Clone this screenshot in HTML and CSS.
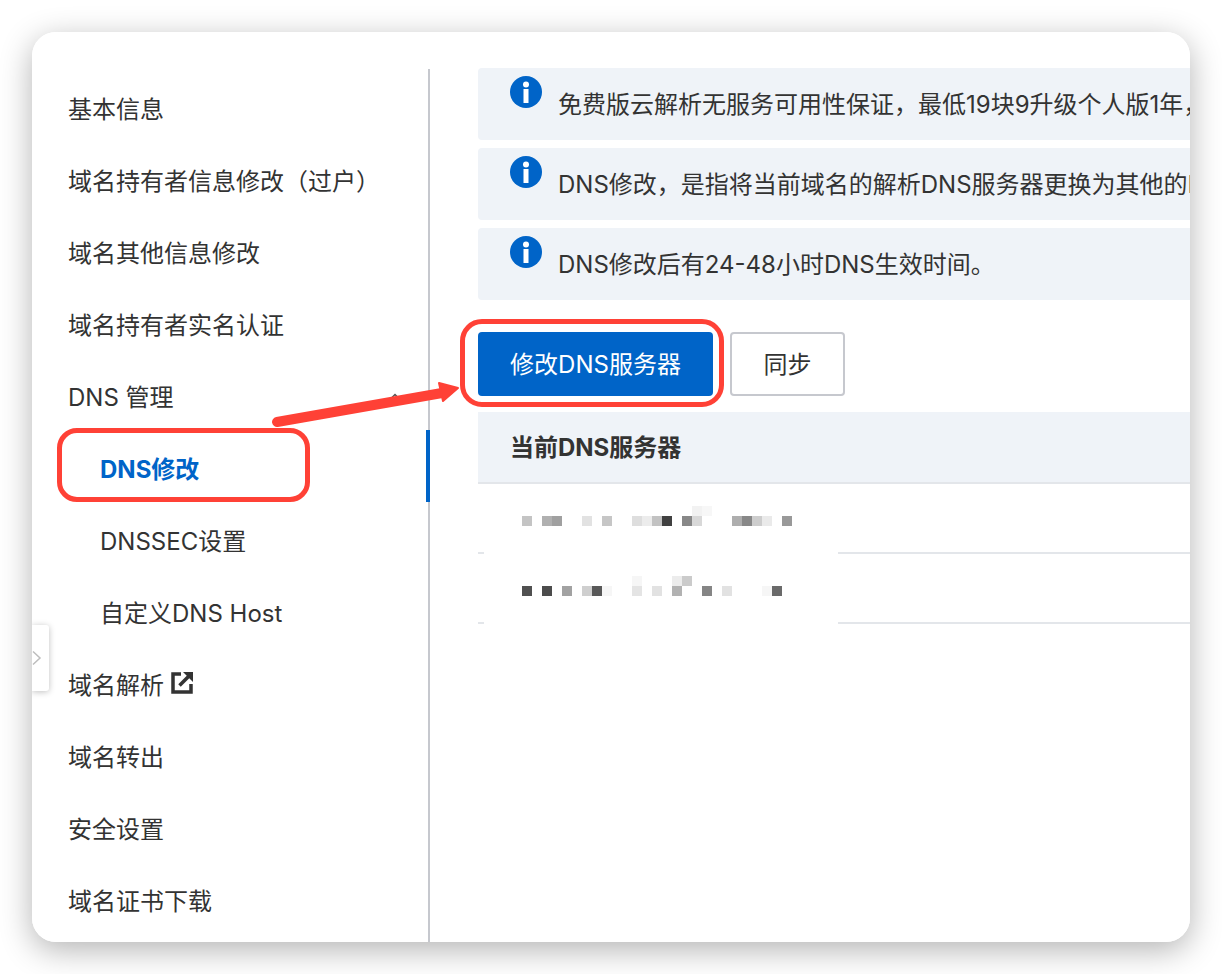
FILE: index.html
```html
<!DOCTYPE html>
<html lang="zh-CN">
<head>
<meta charset="utf-8">
<title>DNS修改</title>
<link rel="stylesheet" href="styles.css">
</head>
<body>
<div class="card">
  <nav class="side">
    <a class="item">基本信息</a>
    <a class="item">域名持有者信息修改（过户）</a>
    <a class="item">域名其他信息修改</a>
    <a class="item">域名持有者实名认证</a>
    <a class="item">DNS 管理<svg class="caret" width="14" height="10" viewBox="0 0 14 10"><path d="M1.5 8 7 2.5 12.5 8" fill="none" stroke="#555" stroke-width="1.5"/></svg></a>
    <a class="item sub active">DNS修改</a>
    <a class="item sub">DNSSEC设置</a>
    <a class="item sub">自定义DNS Host</a>
    <a class="item">域名解析<svg class="ext" width="22" height="22" viewBox="0 0 22 22"><path d="M10 2H2V20H20V12" fill="none" stroke="#333" stroke-width="3.500"/><path d="M8.500 13.500 17.500 4.500" fill="none" stroke="#333" stroke-width="3.500"/><path d="M12 0h10v10z" fill="#333"/></svg></a>
    <a class="item">域名转出</a>
    <a class="item">安全设置</a>
    <a class="item">域名证书下载</a>
  </nav>
  <main class="main">
    <div class="alert">
      <svg class="info" width="32" height="32" viewBox="0 0 32 32"><circle cx="16" cy="16" r="16" fill="#0064c8"/><circle cx="16" cy="8.500" r="3" fill="#fff"/><rect x="13.500" y="13" width="5" height="14" fill="#fff"/></svg>
      <p class="alert-text">免费版云解析无服务可用性保证，最低19块9升级个人版1年，享受更多服务</p>
    </div>
    <div class="alert">
      <svg class="info" width="32" height="32" viewBox="0 0 32 32"><circle cx="16" cy="16" r="16" fill="#0064c8"/><circle cx="16" cy="8.500" r="3" fill="#fff"/><rect x="13.500" y="13" width="5" height="14" fill="#fff"/></svg>
      <p class="alert-text">DNS修改，是指将当前域名的解析DNS服务器更换为其他的DNS服务器</p>
    </div>
    <div class="alert">
      <svg class="info" width="32" height="32" viewBox="0 0 32 32"><circle cx="16" cy="16" r="16" fill="#0064c8"/><circle cx="16" cy="8.500" r="3" fill="#fff"/><rect x="13.500" y="13" width="5" height="14" fill="#fff"/></svg>
      <p class="alert-text">DNS修改后有24-48小时DNS生效时间。</p>
    </div>
    <div class="actions">
      <button class="btn primary">修改DNS服务器</button>
      <button class="btn">同步</button>
    </div>
    <div class="thead">当前DNS服务器</div>
    <div class="row">
      <svg class="mosaic" width="270" height="30" viewBox="0 0 270 30">
        <rect x="0" y="10" width="10" height="10" fill="#c4c4c4"/>
        <rect x="20" y="10" width="10" height="10" fill="#b0b0b0"/><rect x="30" y="10" width="10" height="10" fill="#a0a0a0"/>
        <rect x="60" y="10" width="10" height="10" fill="#e2e2e2"/><rect x="80" y="10" width="10" height="10" fill="#c6c6c6"/>
        <rect x="110" y="10" width="10" height="10" fill="#dedede"/><rect x="120" y="10" width="10" height="10" fill="#ececec"/><rect x="130" y="10" width="10" height="10" fill="#c2c2c2"/><rect x="140" y="10" width="10" height="10" fill="#404040"/>
        <rect x="160" y="10" width="10" height="10" fill="#888"/><rect x="170" y="10" width="10" height="10" fill="#d8d8d8"/>
        <rect x="170" y="0" width="10" height="10" fill="#f2f2f2"/><rect x="180" y="0" width="10" height="10" fill="#f7f7f7"/>
        <rect x="210" y="10" width="10" height="10" fill="#aeaeae"/><rect x="220" y="10" width="10" height="10" fill="#888"/><rect x="230" y="10" width="10" height="10" fill="#cdcdcd"/><rect x="240" y="10" width="10" height="10" fill="#eaeaea"/>
        <rect x="260" y="10" width="10" height="10" fill="#999"/>
      </svg>
    </div>
    <div class="row">
      <svg class="mosaic" width="270" height="30" viewBox="0 0 270 30">
        <rect x="0" y="10" width="10" height="10" fill="#505050"/>
        <rect x="20" y="10" width="10" height="10" fill="#4c4c4c"/>
        <rect x="40" y="10" width="10" height="10" fill="#a2a2a2"/>
        <rect x="60" y="10" width="10" height="10" fill="#cfcfcf"/><rect x="70" y="10" width="10" height="10" fill="#585858"/><rect x="80" y="10" width="10" height="10" fill="#f6f6f6"/>
        <rect x="110" y="10" width="10" height="10" fill="#e4e4e4"/><rect x="110" y="0" width="10" height="10" fill="#f6f6f6"/>
        <rect x="130" y="10" width="10" height="10" fill="#e2e2e2"/>
        <rect x="150" y="10" width="10" height="10" fill="#b2b2b2"/><rect x="150" y="0" width="10" height="10" fill="#ececec"/><rect x="160" y="0" width="10" height="10" fill="#cbcbcb"/>
        <rect x="180" y="10" width="10" height="10" fill="#858585"/>
        <rect x="200" y="10" width="10" height="10" fill="#e2e2e2"/>
        <rect x="240" y="10" width="10" height="10" fill="#f6f6f6"/><rect x="250" y="10" width="10" height="10" fill="#6a6a6a"/>
      </svg>
    </div>
  </main>
  <div class="tab"><svg width="10" height="16" viewBox="0 0 10 16"><path d="M1 1.500 8 8 1 14.500" fill="none" stroke="#bdbdbd" stroke-width="1.500"/></svg></div>
  <div class="mark mark-nav"></div>
  <div class="mark mark-btn"></div>
  <svg class="arrow" width="190" height="52" viewBox="0 0 190 52"><path d="M5 42 170 13" stroke="#ff4136" stroke-width="10" stroke-linecap="round" fill="none"/><path d="M167 3 186 8 171 21 z" fill="#ff4136" stroke="#ff4136" stroke-width="2" stroke-linejoin="round"/></svg>
</div>
</body>
</html>
```
FILE: styles.css
```css
* { box-sizing: border-box; }
html, body { margin: 0; padding: 0; background: #fff; }
body {
  padding: 32px;
  height: 974px;
  overflow: hidden;
  font-family: "Inter", "Noto Sans CJK SC", sans-serif;
  font-size: 24px;
  color: #333;
}
.card {
  position: relative;
  display: flex;
  width: 1158px;
  height: 910px;
  background: #fff;
  border-radius: 24px;
  overflow: hidden;
}
body::before {
  content: "";
  position: absolute;
  left: 32px;
  top: 32px;
  width: 1158px;
  height: 910px;
  border-radius: 24px;
  box-shadow: 0 8px 32px rgba(0, 0, 0, 0.3);
}
.side {
  flex: none;
  width: 398px;
  margin-top: 37px;
  padding-top: 2px;
  border-right: 2px solid #c6c8ce;
  display: flex;
  flex-direction: column;
}
.item {
  position: relative;
  display: flex;
  align-items: center;
  height: 72px;
  padding-left: 36px;
  color: #333;
  white-space: nowrap;
}
.sub { padding-left: 68px; }
.active { color: #0064c8; font-weight: 700; }
.active::after {
  content: "";
  position: absolute;
  right: -2px;
  top: -1px;
  width: 4px;
  height: 72px;
  background: #0064c8;
}
.caret { position: absolute; left: 356px; top: 33px; }
.ext { margin-left: 7px; }
.main {
  flex: 1;
  min-width: 0;
  padding: 36px 0 0 48px;
  overflow: hidden;
}
.alert {
  display: flex;
  height: 72px;
  margin-bottom: 8px;
  padding: 8px 0 0 32px;
  gap: 16px;
  background: #eff3f8;
  border-radius: 4px 0 0 4px;
  overflow: hidden;
}
.info { flex: none; }
.alert-text {
  margin: 0;
  padding-top: 11px;
  line-height: 36px;
  white-space: nowrap;
}
.actions {
  display: flex;
  gap: 17px;
  margin-top: 32px;
}
.btn {
  width: 115px;
  height: 64px;
  background: #fff;
  border: 2px solid #c6c8ce;
  border-radius: 4px;
  font: inherit;
  color: #333;
  padding: 0 0 3px;
}
.primary {
  width: 235px;
  background: #0064c8;
  border: 0;
  color: #fff;
}
.thead {
  display: flex;
  align-items: center;
  height: 72px;
  margin-top: 16px;
  padding: 0 0 3px 32px;
  background: #eff3f8;
  border-bottom: 2px solid #e3e6ea;
  font-weight: 700;
}
.row {
  position: relative;
  display: flex;
  align-items: center;
  height: 70px;
  padding: 6px 0 0 44px;
  border-bottom: 2px solid #e3e6ea;
}
.row::before {
  content: "";
  position: absolute;
  left: 6px;
  bottom: -2px;
  width: 354px;
  height: 2px;
  background: #fff;
}
.mosaic { display: block; }
.tab {
  position: absolute;
  left: 0;
  top: 593px;
  width: 17px;
  height: 66px;
  display: flex;
  align-items: center;
  background: #fff;
  border-radius: 0 3px 3px 0;
  box-shadow: 0 1px 6px rgba(0, 0, 0, 0.25);
}
.mark {
  position: absolute;
  border: 5px solid #ff4136;
  pointer-events: none;
}
.mark-nav {
  left: 25px;
  top: 396px;
  width: 253px;
  height: 74px;
  border-radius: 20px;
}
.mark-btn {
  left: 428px;
  top: 287px;
  width: 264px;
  height: 88px;
  border-radius: 22px;
}
.arrow {
  position: absolute;
  left: 240px;
  top: 348px;
}
```
